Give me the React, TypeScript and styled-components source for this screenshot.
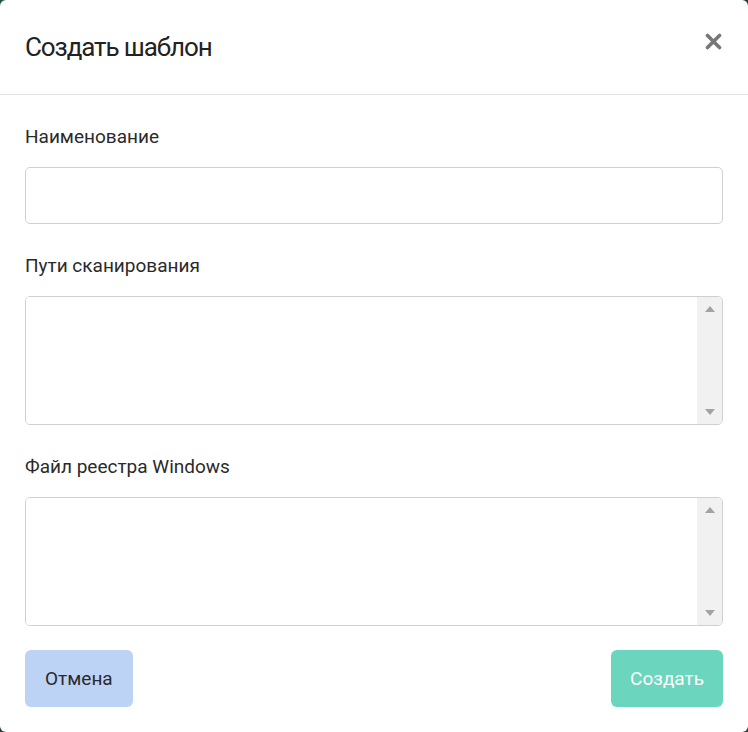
import * as React from "react";
import styled, { createGlobalStyle } from "styled-components";

const GlobalStyle = createGlobalStyle`
  html, body {
    margin: 0;
    padding: 0;
    height: 100%;
  }
  body {
    background: linear-gradient(135deg, #1d5546 0%, #2b3a36 50%, #3a3a3a 100%);
    font-family: "Roboto", "Noto Sans", sans-serif;
  }
  * {
    box-sizing: border-box;
  }
`;

const Modal = styled.div`
  width: 748px;
  height: 732px;
  background: #fff;
  border-radius: 6px;
  display: flex;
  flex-direction: column;
  overflow: hidden;
`;

const Header = styled.div`
  flex-shrink: 0;
  height: 95px;
  padding: 0 26px 0 25px;
  display: flex;
  align-items: center;
  justify-content: space-between;
  border-bottom: 1px solid #e4e4e8;
`;

const Title = styled.h4`
  margin: 0;
  font-size: 26px;
  font-weight: 400;
  letter-spacing: -1.1px;
  color: #222;
  line-height: 1;
`;

const CloseButton = styled.button`
  border: 0;
  background: none;
  padding: 0;
  margin-bottom: 12px;
  width: 18px;
  height: 18px;
  display: flex;
  align-items: center;
  justify-content: center;
  cursor: pointer;
`;

const Body = styled.div`
  flex: 1;
  padding: 27px 25px 25px;
  display: flex;
  flex-direction: column;
`;

const Field = styled.div`
  display: flex;
  flex-direction: column;
  gap: 15px;

  & + & {
    margin-top: 27px;
  }
`;

const Label = styled.label`
  font-size: 19px;
  line-height: 30px;
  color: #2a2a2a;
`;

const Input = styled.input`
  height: 57px;
  border: 1px solid #cfd0d4;
  border-radius: 5px;
  padding: 0 14px;
  font: inherit;
  font-size: 18px;
  outline: none;
`;

const AreaBox = styled.div`
  height: 129px;
  border: 1px solid #cfd0d4;
  border-radius: 5px;
  display: flex;
  overflow: hidden;
`;

const TextArea = styled.textarea`
  flex: 1;
  border: 0;
  resize: none;
  padding: 10px 14px;
  font: inherit;
  font-size: 18px;
  outline: none;
  overflow: hidden;
`;

const Scrollbar = styled.div`
  width: 25px;
  background: #f1f1f1;
  display: flex;
  flex-direction: column;
  justify-content: space-between;
  align-items: center;
  padding: 9px 0;
`;

const Arrow = styled.span<{ $down?: boolean }>`
  width: 0;
  height: 0;
  border-left: 5px solid transparent;
  border-right: 5px solid transparent;
  ${(p) =>
    p.$down
      ? "border-top: 6px solid #a3a3a3;"
      : "border-bottom: 6px solid #a3a3a3;"}
`;

const Footer = styled.div`
  margin-top: auto;
  display: flex;
  justify-content: space-between;
`;

const Button = styled.button<{ $primary?: boolean }>`
  height: 57px;
  padding: 0 ${(p) => (p.$primary ? "19px" : "20px")};
  border: 0;
  border-radius: 6px;
  font: inherit;
  font-size: 19px;
  cursor: pointer;
  background: ${(p) => (p.$primary ? "#6cd5bd" : "#bdd3f6")};
  color: ${(p) => (p.$primary ? "#fff" : "#2a2a2a")};
`;

const CloseIcon = () => (
  <svg width="17" height="17" viewBox="0 0 17 17">
    <path
      d="M2.5 2.5 L14.5 14.5 M14.5 2.5 L2.5 14.5"
      stroke="#777"
      strokeWidth="3.6"
      strokeLinecap="round"
    />
  </svg>
);

const ScrollArea = () => (
  <AreaBox>
    <TextArea />
    <Scrollbar>
      <Arrow />
      <Arrow $down />
    </Scrollbar>
  </AreaBox>
);

const App = () => {
  return (
    <>
      <GlobalStyle />
      <Modal>
        <Header>
          <Title>Создать шаблон</Title>
          <CloseButton aria-label="Закрыть">
            <CloseIcon />
          </CloseButton>
        </Header>
        <Body>
          <Field>
            <Label>Наименование</Label>
            <Input />
          </Field>
          <Field>
            <Label>Пути сканирования</Label>
            <ScrollArea />
          </Field>
          <Field>
            <Label>Файл реестра Windows</Label>
            <ScrollArea />
          </Field>
          <Footer>
            <Button>Отмена</Button>
            <Button $primary>Создать</Button>
          </Footer>
        </Body>
      </Modal>
    </>
  );
};

export default App;
